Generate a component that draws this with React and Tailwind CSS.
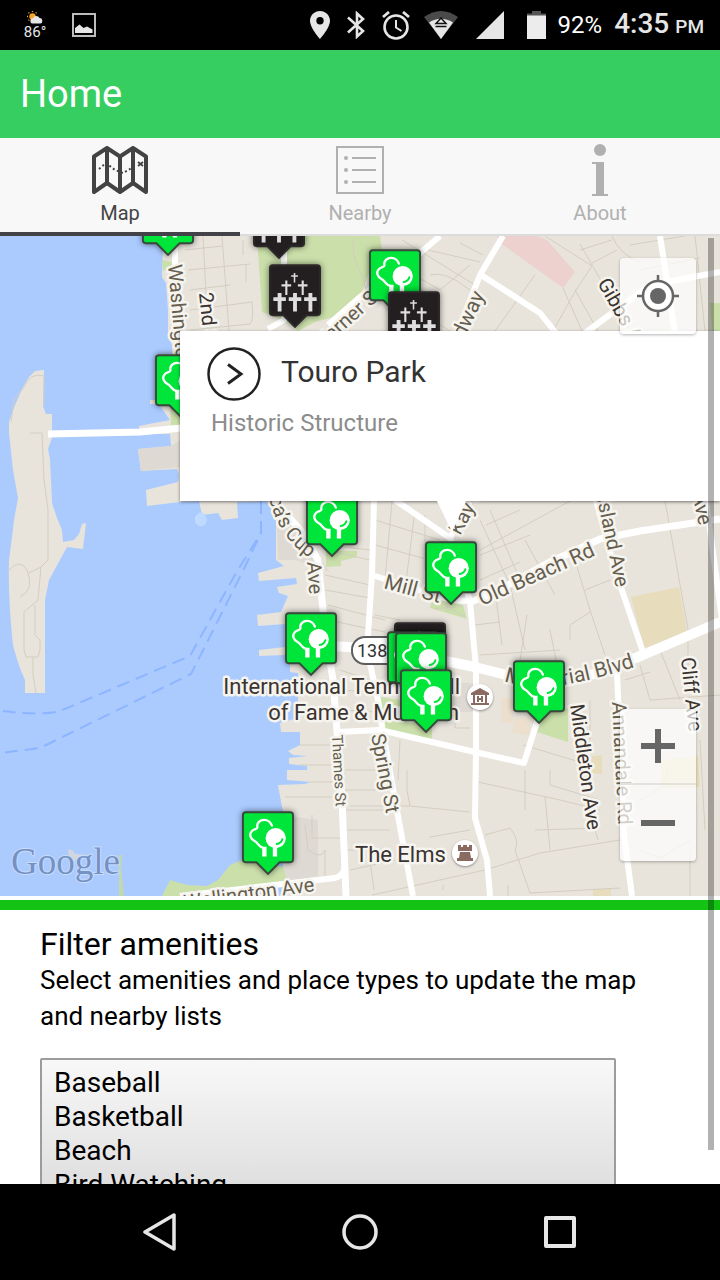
import React from "react";

const pins = [
  { kind: "cemetery", name: "North cemetery", x: 279, y: 259 },
  { kind: "park", name: "Storer Park", x: 168, y: 256 },
  { kind: "park", name: "Equality Park", x: 395, y: 313 },
  { kind: "cemetery", name: "Island cemetery", x: 295, y: 328 },
  { kind: "cemetery", name: "Touro cemetery", x: 414, y: 355 },
  { kind: "park", name: "Long Wharf", x: 181, y: 418 },
  { kind: "park", name: "Perrotti Park", x: 332, y: 557 },
  { kind: "park", name: "Touro Park", x: 451, y: 605 },
  { kind: "park", name: "King Park", x: 311, y: 676 },
  { kind: "cemetery", name: "Chapel cemetery", x: 420, y: 686 },
  { kind: "park", name: "Aquidneck Park", x: 413, y: 695 },
  { kind: "park", name: "Library Park", x: 421, y: 696 },
  { kind: "park", name: "Tennis Hall of Fame", x: 426, y: 733 },
  { kind: "park", name: "Middleton Park", x: 539, y: 724 },
  { kind: "park", name: "Spencer Park", x: 268, y: 875 },
];

const amenities = [
  "Baseball",
  "Basketball",
  "Beach",
  "Bird Watching",
  "Boating",
  "Fishing",
  "Hiking",
  "Historic Structure",
];

const MAP_TOP = 236;
const MAP_WIDTH = 720;

const bubble = "M4 1H50Q53 1 53 4V50Q53 53 50 53H39L27 65L15 53H4Q1 53 1 50V4Q1 1 4 1Z";

function Cross({ x, y, w, h, t }) {
  return (
    <path
      d={`M${x} ${y}v${h}M${x - w / 2} ${y + h * 0.33}h${w}`}
      stroke="#dedede"
      strokeWidth={t}
      fill="none"
    />
  );
}

function Pin({ pin }) {
  const park = pin.kind === "park";
  return (
    <button
      type="button"
      aria-label={pin.name}
      className="absolute h-16 w-[52px] -translate-x-1/2 -translate-y-full"
      style={{ left: `${(pin.x / MAP_WIDTH) * 100}%`, top: pin.y - MAP_TOP }}
    >
      <svg viewBox="0 0 54 66" className="h-full w-full overflow-visible drop-shadow-[0_0_3px_rgba(0,0,0,0.55)]">
        <path
          d={bubble}
          fill={park ? "#00e53a" : "#231f20"}
          stroke={park ? "#38493b" : "#2c2829"}
          strokeWidth="2"
        />
        {park ? (
          <>
            <path
              d="M22 38C17 37 17 33 13 31C9 29 7 24 10 21C12 18 16 19 16 17C15 12 19 9 23 9C27 9 30 12 31 15"
              fill="none"
              stroke="#fff"
              strokeWidth="2.400"
              strokeLinecap="round"
            />
            <path d="M21 37h4.500v10h-4.500zM32 37h4.500v10h-4.500z" fill="#fff" />
            <circle cx="35" cy="28" r="10.500" fill="#fff" />
            <path d="M36 34Q40.500 33.500 42 29" stroke="#00e53a" strokeWidth="2" strokeLinecap="round" fill="none" />
          </>
        ) : (
          <>
            <Cross x={26.5} y={9} w={7} h={10} t={1.6} />
            <Cross x={18} y={17} w={10} h={15} t={2.2} />
            <Cross x={35} y={17} w={10} h={15} t={2.2} />
            <Cross x={11} y={30} w={13} h={19} t={4} />
            <Cross x={27} y={30} w={13} h={19} t={4} />
            <Cross x={43} y={30} w={13} h={19} t={4} />
          </>
        )}
      </svg>
    </button>
  );
}

function Label({ x, y, r = 0, size = 20, end, dark, children }) {
  return (
    <text
      transform={`translate(${x} ${y}) rotate(${r})`}
      fontSize={size}
      textAnchor={end ? "end" : "start"}
      fill={dark ? "#3b3330" : "#665e4e"}
      stroke="#f6f4ef"
      strokeWidth="5"
      strokeLinejoin="round"
      paintOrder="stroke"
    >
      {children}
    </text>
  );
}

function MapCanvas() {
  return (
    <svg
      viewBox="0 236 720 660"
      preserveAspectRatio="xMidYMid slice"
      className="absolute inset-0 h-full w-full font-[Roboto,sans-serif]"
      role="img"
      aria-label="Street map"
    >
      <rect y="236" width="720" height="660" fill="#abcbff" />
      <path
        d="M163 236L162 277L166 283L168 310L168 335L172 345L172 354H156V404H150V400H156L170 420L139 426V434L170 434L171 446L138 449L141 471L177 469Q180 475 178 482L146 490L147 506L180 502L199 501L202 515L218 513L222 520L238 518L237 502L276 501V560L284 566L258 573L259 581L296 578L297 584L277 587L279 593L288 596L281 612L257 615L258 626L285 624V647L259 650V656L285 655L290 663V672L298 673V718L280 723L281 732H300V745L288 751L293 755L308 756L289 758V764L307 766V770H287V780L311 782L305 784L278 785L283 812L284 896H720V236Z"
        fill="#e8e4dc"
      />
      <path d="M44 370L35 371L29 377L23 387L15 405L9 422V433L13 470L18 498L14 520L12 537L9 560Q8 600 13 645Q18 665 25 680V693L45 693V600L49 580L67 547L83 549L86 523L82 524L79 534L74 540L63 542L62 530L57 518L52 503L50 459L48 449L52 438V414H46L43 406Z" fill="#e8e4dc" />
      <path d="M138 449L171 446L180 440V467L141 471ZM276 501L278 560H295L330 572L300 530Z" fill="#dedad3" />
      <path d="M283 815L318 820V876L283 882ZM442 683H478V712H450Z" fill="#dedad3" />
      <path d="M195 517Q203 506 207 520Q206 527 199 526Q194 524 195 517Z" fill="#bedaff" />
      <path d="M68 850Q72 848 75 854L90 855V858H77L73 864Q69 862 68 850Z" fill="#d3d6de" />
      <path d="M119 855L122 855L121 868L124 896H119L119 870Z" fill="#c3d9ac" />

      <g fill="#cadfaa">
        <path d="M257 236H380L382 250L370 270L360 297L340 314L330 318L315 322L298 331L287 322L262 312Z" />
        <path d="M162 260L172 262L172 268L163 271ZM170 404H182V425H171Z" />
        <path d="M326 551H357V557L341 561V566L326 567Z" />
        <path d="M433 597L463 605L467 619L430 608Z" />
        <path d="M380 697L400 700L432 728V739L385 730Z" />
        <path d="M568 708V742L537 732L545 712Z" />
        <path d="M710 303H720V331H712Z" />
        <path d="M162 896L170 880L187 885L207 886L218 880L230 865L242 860L283 867L288 884L200 896Z" />
      </g>
      <path d="M497 236H537L547 240L575 272L563 288L499 242Z" fill="#ecd1cf" />
      <g fill="#e7dcbb">
        <path d="M631 597L679 587L687 632L644 648ZM592 756L602 755V774L590 773ZM661 760L698 756L700 787L661 788ZM593 889H611V896H593Z" />
      </g>
      <path d="M501 698H513V723H501ZM515 718H530V735L512 733Z" fill="#ecdfcd" />

      <g fill="none" stroke="#8db5ff" strokeWidth="2" strokeDasharray="13 7">
        <path d="M261 501V533L236 573L190 656L60 711Q40 716 3 711" />
        <path d="M261 501V533L242 573L191 674L40 748L0 753" />
      </g>

      <g fill="none" stroke="#d3cebf" strokeWidth="1">
        <path d="M30 433H42L44 480L48 510V560L41 567L29 573M9 570Q20 558 27 570Q35 590 20 597M41 567L38 600L24 612V650L26 657H38Q41 650 40 640L35 635V605M33 657V675L36 693M11 422L14 400L24 387Q30 372 44 376V405" />
        <path d="M203 236L208 331M222 236L229 331M185 250L222 246M188 270L250 264M190 290L230 285M190 310L252 302Q254 320 250 324L190 330M243 240V255M246 265V282" />
        <path d="M354 238Q350 255 362 275L366 290M388 260L440 290L470 265M402 240L475 285M430 275Q445 270 470 290M400 300L450 331M428 250L480 262M460 243L483 255M495 331L535 275M545 236L592 266L576 290L553 331M575 290L598 331M580 244L630 331M580 250L612 240M592 263L617 250M612 236Q620 255 640 262M630 245L720 230M695 236L705 331M563 288L582 331M640 270L700 258" />
        <path d="M325 550L370 560M325 590L370 598M328 605L385 620M328 620L385 632M330 545L370 550M325 575L370 585M375 520L440 540M392 501L385 580M415 510L405 590M425 515V570M375 545L430 560M375 615L400 620M378 640L400 643M340 670L370 680M340 690L370 692M342 710L376 712" />
        <path d="M480 520L510 585L525 650M490 510L520 580M525 540L555 595M486 525L520 510M480 555L530 535M480 580L520 562M570 501L480 550M575 560L590 610L605 655M495 590L502 645M475 625L500 622M527 615L520 660M590 612L570 625V640M585 590L610 580M665 501L690 640M480 655L560 650M550 630L560 680M660 650L680 700M640 665L650 700L720 695M625 680L650 672M688 640V690" />
        <path d="M300 745H335M285 797H335M300 765H340M310 782H340M345 770H380M345 790H382M345 810H385M345 830H390M345 850H390M350 870L395 860M312 815V838H345M305 825L308 850Q322 860 325 850V880M400 740L398 780M407 770V790L410 806M350 806H410L470 812M478 782L560 800L600 810M525 770V810M545 796L550 850M523 745L590 765M550 770V785L600 800M430 837L470 830M485 835L510 828Q520 840 515 850L530 893L620 888M372 895L485 870L540 853L620 840M535 830L600 828M598 840L595 830M640 800Q665 790 668 770M640 850L660 858L690 840M700 740L705 830M690 850V896M455 723V728H470M370 860L374 890M508 885V896M443 885V890M590 700V740" />
        <path d="M433 599L465 617M448 601V612M463 606L434 609" />
      </g>

      <g fill="none" stroke="#fff" strokeWidth="7" strokeLinejoin="round">
        <path d="M48 434L140 432L182 428" />
        <path d="M175 240V262L180 350" strokeWidth="6" />
        <path d="M440 236L420 253L360 297L328 325M268 329L284 320V240M503 236L480 275L458 331M481 275L540 313L556 333M585 333L650 285L720 272M660 236L675 333" strokeWidth="6" />
        <path d="M274 500L302 532L318 560L322 600L325 630L333 680L337 732L342 800L346 896" />
        <path d="M374 500L372 575L367 650L378 700L383 732L395 800L413 896" strokeWidth="6" />
        <path d="M372 575L450 600L470 601M395 500L450 538L470 501M450 538L470 601L476 668V750L475 818L487 860L490 896" strokeWidth="6" />
        <path d="M470 602L490 595L548 563L600 539L640 531L720 519" />
        <path d="M333 646L390 650L475 667L510 676L560 684L600 672L643 655L720 622" strokeWidth="10" />
        <path d="M338 732L380 730L475 752L524 763L540 712" strokeWidth="6" />
        <path d="M596 500L615 570L643 652M706 500L722 620M617 672L624 835L632 896M180 896L283 884L335 878Q345 875 345 865" strokeWidth="6" />
      </g>

      <g>
        <rect x="352" y="637" width="50" height="27" rx="13" fill="#fff" stroke="#5d5d5d" strokeWidth="2" />
        <text x="357" y="657" fontSize="18" fill="#333">138</text>
      </g>

      <Label x={168} y={265} r={85}>Washington St</Label>
      <Label x={199} y={293} r={84} dark>2nd St</Label>
      <Label x={319} y={353} r={-42}>Warner St</Label>
      <Label x={485} y={295} r={-65} size={21} end>Broadway</Label>
      <Label x={597} y={283} r={60} dark>Gibbs Ave</Label>
      <Label x={307} y={562} r={86}>Ave</Label>
      <Label x={383} y={588} r={15} size={21}>Mill St</Label>
      <Label x={460} y={536} r={-62}>Kay St</Label>
      <Label x={482} y={606} r={-24} size={21}>Old Beach Rd</Label>
      <Label x={616} y={588} r={78} end>Island Ave</Label>
      <Label x={699} y={526} r={78} end>Ave</Label>
      <Label x={681} y={658} r={84} dark>Cliff Ave</Label>
      <Label x={570} y={705} r={82} dark>Middleton Ave</Label>
      <Label x={612} y={702} r={87}>Annandale Rd</Label>
      <Label x={332} y={735} r={87} size={15}>Thames St</Label>
      <Label x={371} y={735} r={79}>Spring St</Label>
      <Label x={315} y={891} r={-8} end>Wellington Ave</Label>
      <path id="cup" d="M269 498C276 525 288 545 316 562" fill="none" />
      <path id="memorial" d="M504 681C530 690 560 692 650 662" fill="none" />
      <g fill="#665e4e" stroke="#f6f4ef" strokeWidth="5" strokeLinejoin="round" paintOrder="stroke">
        <text fontSize="20"><textPath href="#cup">ca’s Cup</textPath></text>
        <text fontSize="21"><textPath href="#memorial">Memorial Blvd</textPath></text>
      </g>
      <Label x={460} y={694} size={22} end dark>International Tennis Hall</Label>
      <Label x={459} y={720} size={22} end dark>of Fame &amp; Museum</Label>
      <Label x={355} y={862} size={22} dark>The Elms</Label>

      <g className="drop-shadow-[0_1px_1px_rgba(0,0,0,0.4)]">
        <circle cx="480" cy="697" r="13" fill="#fff" />
        <circle cx="465" cy="853" r="13" fill="#fff" />
      </g>
      <path d="M471 693L480 688L489 693V695H471ZM473 695H475V703H473ZM485 695H487V703H485ZM471 703H489V705H471ZM477 696H479V698H481V696H483V702H481V700H479V702H477Z" fill="#8a6b62" />
      <path d="M458 845H461V847H463V845H467V847H469V845H472V851H458ZM460 852H470L471 858H473V861H457V858H459Z" fill="#8a6b62" />

      <text x="11" y="874" fontSize="37" className="font-['Liberation_Serif',serif]" fill="#7592c4" stroke="#c9dcfb" strokeWidth="2" paintOrder="stroke">
        Google
      </text>
    </svg>
  );
}

function StatusBar() {
  return (
    <div className="flex h-[50px] shrink-0 items-center bg-black text-[#e6e6e6]">
      <div className="ml-[23px] flex w-6 flex-col items-center">
        <svg viewBox="0 0 16 13" className="h-[13px] w-4" aria-label="Partly cloudy">
          <circle cx="5.500" cy="5.500" r="3.200" fill="#f5a623" />
          <path d="M5.500 0v1M1.500 1.500l.8.8M0 5.500h1M9.500 1.500l-.8.8M1.500 9.500l.8-.8" stroke="#f5a623" strokeWidth="1.300" />
          <path d="M6 12.500a2.600 2.600 0 010-5.200 3.600 3.600 0 016.500-.3 2.800 2.800 0 01.8 5.500z" fill="#e6e6e6" />
        </svg>
        <span className="text-[15px] leading-4">86°</span>
      </div>
      <svg viewBox="0 0 24 24" className="ml-[25px] h-6 w-6" aria-label="Image saved">
        <rect x="1" y="1" width="22" height="22" fill="none" stroke="#bdbdbd" strokeWidth="2" />
        <path d="M3 20V15L7.500 11.500L11.500 15L15 13.500L20.500 16.500V20Z" fill="#e6e6e6" />
      </svg>
      <div className="ml-auto flex items-center">
        <svg viewBox="0 0 20 28" className="h-7 w-5" aria-label="Location" fill="currentColor">
          <path fillRule="evenodd" d="M10 0C4.500 0 0 4.300 0 9.800C0 17 10 28 10 28S20 17 20 9.800C20 4.300 15.500 0 10 0ZM10 6a3.700 3.700 0 110 7.400A3.700 3.700 0 0110 6Z" />
        </svg>
        <svg viewBox="0 0 18 28" className="ml-[17px] h-7 w-[18px]" aria-label="Bluetooth" fill="none" stroke="currentColor" strokeWidth="2.600">
          <path d="M1 6.500L16 20L10 25.500V2.500L16 8L1 21.500" />
        </svg>
        <svg viewBox="0 0 28 29" className="ml-[17px] h-[29px] w-7" aria-label="Alarm" fill="none" stroke="currentColor" strokeWidth="2.600">
          <circle cx="14" cy="16" r="11.500" />
          <path d="M14 9V16.500L19.500 20" strokeWidth="2" />
          <path d="M1 6L7 1M27 6L21 1" strokeWidth="2.800" />
        </svg>
        <svg viewBox="0 0 34 28" className="ml-3.5 h-7 w-[34px]" aria-label="Wi-Fi">
          <path d="M0 6Q17 -6 34 6L17 28Z" fill="#4a4a4a" />
          <path d="M5 11.500Q17 4 29 11.500L17 28Z" fill="#e6e6e6" />
          <path d="M12 12.500L17 7L22 12.500ZM11.500 15.500H22.500" fill="none" stroke="#111" strokeWidth="1.500" />
        </svg>
        <svg viewBox="0 0 28 28" className="ml-[18px] h-7 w-7" aria-label="Signal" fill="currentColor">
          <path d="M28 0V28H0Z" />
        </svg>
        <svg viewBox="0 0 19 28" className="ml-[23px] h-7 w-[19px]" aria-label="Battery">
          <path d="M5 0H14V2.500H19V5H0V2.500H5Z" fill="#555" />
          <path d="M0 4.500H19V28H0Z" fill="#ececec" />
        </svg>
        <span className="ml-3 text-2xl leading-[50px] text-white">92%</span>
        <span className="mr-4 ml-3 flex items-baseline gap-1.5 leading-[50px] font-medium">
          <span className="text-[28px]">4:35</span>
          <span className="text-[19px]">PM</span>
        </span>
      </div>
    </div>
  );
}

const tabs = [
  {
    name: "Map",
    icon: (
      <svg viewBox="0 0 56 48" className="h-12 w-14" fill="none" stroke="currentColor" strokeWidth="4" strokeLinejoin="round">
        <path d="M2 10.500L15 2L28 10.500L41 2L54 10.500V46L41 37L28 46L15 37L2 46ZM15 2V37M28 10.500V46M41 2V37" />
        <path d="M7 23L14 17L23 24L31 27L38 23L43 17" strokeWidth="2" strokeDasharray="2 2.500" />
        <path d="M46 16L51 20M51 16L46 20" strokeWidth="1.800" />
      </svg>
    ),
  },
  {
    name: "Nearby",
    icon: (
      <svg viewBox="0 0 48 48" className="h-12 w-12" fill="none" stroke="currentColor" strokeWidth="2">
        <path d="M1 1H47V47H1ZM16 12H40M16 24H40M16 36H40" />
        <g fill="currentColor" stroke="none">
          <circle cx="10" cy="12" r="2" />
          <circle cx="10" cy="24" r="2" />
          <circle cx="10" cy="36" r="2" />
        </g>
      </svg>
    ),
  },
  {
    name: "About",
    icon: (
      <svg viewBox="0 0 16 52" className="-mt-0.5 h-[52px] w-4 overflow-visible" fill="currentColor">
        <circle cx="8" cy="6" r="6" />
        <path d="M0 18H12V50H16V52H0V50H4V20H0Z" />
      </svg>
    ),
  },
];

function Tabs() {
  return (
    <div role="tablist" className="grid h-[98px] shrink-0 grid-cols-3 bg-[#f8f8f8]">
      {tabs.map((tab, i) => (
        <button
          key={tab.name}
          type="button"
          role="tab"
          aria-selected={i === 0}
          className={
            i === 0
              ? "flex flex-col items-center border-b-4 border-[#434248] pt-2 text-[#434343]"
              : "flex flex-col items-center border-b-2 border-[#dcdcdc] pt-2 text-[#b0b0b0]"
          }
        >
          <span className="flex h-12 items-start">{tab.icon}</span>
          <span className="mt-[7px] text-xl leading-6">{tab.name}</span>
        </button>
      ))}
    </div>
  );
}

function InfoWindow() {
  return (
    <section className="absolute top-[95px] right-0 left-1/4 h-[170px] bg-white px-[27px] pt-4 shadow-[0_1px_3px_rgba(0,0,0,0.5)]">
      <a href="#touro-park" className="flex items-start gap-5">
        <svg viewBox="0 0 54 54" className="h-[54px] w-[54px]" fill="none" stroke="#222" strokeWidth="2.500">
          <circle cx="27" cy="27" r="25.500" />
          <path d="M21 17.500L34 27L21 36.500" strokeWidth="3" />
        </svg>
        <span className="text-[30px] leading-[50px] text-[#333]">Touro Park</span>
      </a>
      <p className="mt-1 ml-1 text-2xl leading-9 text-[#8c8c8c]">Historic Structure</p>
      <svg viewBox="0 0 32 32" className="absolute top-full left-[257px] h-8 w-8" fill="#fff">
        <path d="M0 0H29L15 31Z" />
      </svg>
    </section>
  );
}

export default function App() {
  return (
    <div className="flex h-screen flex-col overflow-hidden bg-white font-[Roboto,sans-serif] text-black">
      <StatusBar />
      <header className="flex h-[88px] shrink-0 items-center bg-[#36ce60] px-5">
        <h1 className="text-[38px] leading-[48px] text-white">Home</h1>
      </header>
      <Tabs />
      <main className="relative min-h-0 flex-1 overflow-hidden">
        <div className="relative h-[660px] overflow-hidden">
          <MapCanvas />
          {pins.map((pin) => (
            <Pin key={`${pin.x}-${pin.y}`} pin={pin} />
          ))}
          <InfoWindow />
          <button
            type="button"
            aria-label="My location"
            className="absolute top-[22px] right-6 flex h-[76px] w-[76px] items-center justify-center rounded-sm bg-white/70 text-[#666] shadow-[0_1px_3px_rgba(0,0,0,0.3)]"
          >
            <svg viewBox="0 0 42 42" className="h-[42px] w-[42px]" fill="none" stroke="currentColor" strokeWidth="4">
              <circle cx="21" cy="21" r="15" fill="#fff" strokeWidth="2.500" />
              <circle cx="21" cy="21" r="8" fill="currentColor" stroke="none" />
              <path d="M21 0V5M21 37V42M0 21H5M37 21H42" strokeWidth="2.500" />
            </svg>
          </button>
          <div className="absolute right-6 bottom-[35px] flex w-[76px] flex-col divide-y-2 divide-[#e4e2dd] rounded-sm bg-white/70 text-[#666] shadow-[0_1px_3px_rgba(0,0,0,0.3)]">
            <button type="button" aria-label="Zoom in" className="flex h-[76px] items-center justify-center">
              <svg viewBox="0 0 34 34" className="h-[34px] w-[34px]" fill="currentColor">
                <path d="M14 0H20V14H34V20H20V34H14V20H0V14H14Z" />
              </svg>
            </button>
            <button type="button" aria-label="Zoom out" className="flex h-[76px] items-center justify-center">
              <svg viewBox="0 0 34 6" className="h-1.5 w-[34px]" fill="currentColor">
                <path d="M0 0H34V6H0Z" />
              </svg>
            </button>
          </div>
        </div>
        <div className="mt-1 border-t-[10px] border-[#14c414] px-10 pt-4">
          <label htmlFor="amenities" className="block">
            <span className="block text-[32px] leading-9">Filter amenities</span>
            <span className="block text-[26px] leading-9">
              Select amenities and place types to update the map and nearby lists
            </span>
          </label>
          <select
            id="amenities"
            multiple
            size={8}
            className="mt-6 block h-[290px] w-9/10 appearance-none overflow-hidden rounded-xs border-2 border-[#9c9c9c] bg-linear-to-b from-[#f8f8f8] to-[#c0c0c0] px-3 py-1.5 text-[28px] text-black"
          >
            {amenities.map((name) => (
              <option key={name} className="h-[34px] p-0 leading-[34px]">
                {name}
              </option>
            ))}
          </select>
        </div>
        <div className="absolute top-0.5 right-1.5 h-[912px] w-1.5 bg-black/30" />
      </main>
      <nav aria-label="System" className="flex h-24 shrink-0 bg-black px-15 text-[#e6e6e6]">
        <button type="button" aria-label="Back" className="flex flex-1 items-center justify-center">
          <svg viewBox="0 0 34 38" className="h-[38px] w-[34px]" fill="none" stroke="currentColor" strokeWidth="3.500" strokeLinejoin="round">
            <path d="M31 2V36L2 19Z" />
          </svg>
        </button>
        <button type="button" aria-label="Home screen" className="flex flex-1 items-center justify-center">
          <svg viewBox="0 0 36 36" className="h-9 w-9" fill="none" stroke="currentColor" strokeWidth="3.500">
            <circle cx="18" cy="18" r="16" />
          </svg>
        </button>
        <button type="button" aria-label="Recent apps" className="flex flex-1 items-center justify-center">
          <svg viewBox="0 0 32 32" className="h-8 w-8" fill="none" stroke="currentColor" strokeWidth="4" strokeLinejoin="round">
            <rect x="2" y="2" width="28" height="28" />
          </svg>
        </button>
      </nav>
    </div>
  );
}
